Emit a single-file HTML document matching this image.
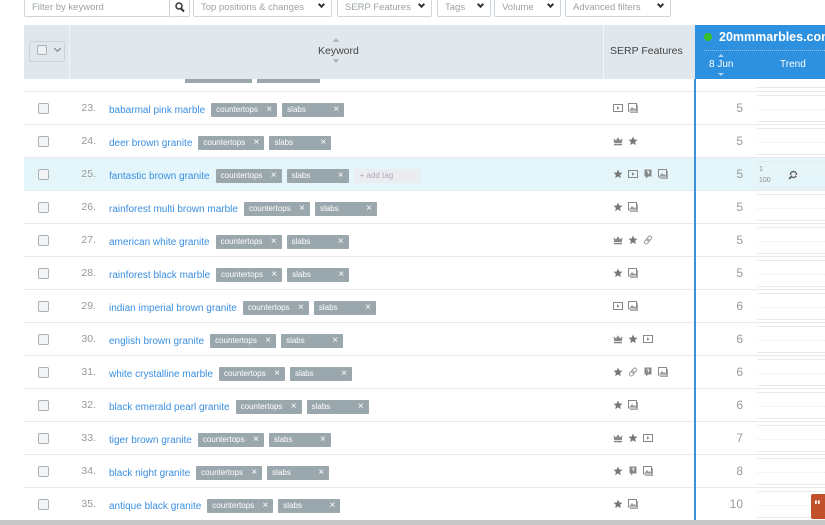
<!DOCTYPE html>
<html><head><meta charset="utf-8"><style>
*{box-sizing:border-box;margin:0;padding:0}
body{width:825px;height:525px;overflow:hidden;background:#fff;font-family:"Liberation Sans",sans-serif;position:relative}
.ab{position:absolute}
.fb{position:absolute;top:-2px;height:19px;border:1px solid #cfd6db;border-radius:2px;background:#fff;font-size:9.5px;color:#9aa3a8;line-height:17px;padding-left:7px;white-space:nowrap;overflow:hidden}
.fb .ch{position:absolute;right:7px;top:3px;width:5px;height:5px;border-right:2px solid #333;border-bottom:2px solid #333;transform:rotate(45deg)}
.row{position:absolute;left:24px;width:801px;height:33px;border-top:1px solid #e6eaed}
.cb{position:absolute;left:14px;top:11px;width:11px;height:11px;border:1px solid #aab2b7;border-radius:2px;background:#f2f4f5}
.num{position:absolute;left:45px;width:27px;text-align:right;top:10px;font-size:10.5px;color:#999}
.kw{position:absolute;left:85px;top:11px;font-size:10px;color:#3a8fe0;white-space:nowrap;display:flex;align-items:center}
.kw span.t{margin-left:6px;display:inline-block;height:14px;background:#9aa7ac;color:#fff;font-size:8px;line-height:14px;padding-left:5px;border-radius:1px;position:relative}
.kw span.c{width:66px}.kw span.s{width:62px;margin-left:5px}
.kw span.t:after{content:"×";position:absolute;right:5px;top:0;font-size:10px}
.kw span.add{margin-left:5px;width:67px;height:14px;background:#eaeef0;color:#aab;font-size:8px;line-height:14px;padding-left:6px;display:inline-block}
.ic{position:absolute;left:589px;top:11px;display:flex;gap:5px}
.ic svg{width:10px;height:10px}
.pos{position:absolute;left:680px;width:39px;text-align:right;top:9px;font-size:12px;color:#999}
.tr{position:absolute;left:733px;width:68px;top:3px;height:27px;border-top:1px solid #e8ebed;border-bottom:1px solid #e8ebed}
.tr:after{content:"";position:absolute;left:0;right:0;top:13px;border-top:1px dotted #eceef0}
</style></head><body>
<svg width="0" height="0" style="position:absolute"><defs>
<symbol id="st" viewBox="0 0 10 10"><path d="M5 .5l1.3 3 3.2.3-2.4 2.1.7 3.2L5 7.4 2.2 9.1l.7-3.2L.5 3.8l3.2-.3z" fill="#777"/></symbol>
<symbol id="cr" viewBox="0 0 10 10"><path d="M1.2 7.2L.6 2.4 3 4.4 5 1.2 7 4.4 9.4 2.4 8.8 7.2z" fill="#888"/><rect x="1" y="8" width="8" height="1.3" fill="#888"/></symbol>
<symbol id="vi" viewBox="0 0 10 10"><rect x=".5" y="1.5" width="9" height="7" fill="none" stroke="#888"/><path d="M4 3.3v3.4L6.6 5z" fill="#888"/></symbol>
<symbol id="im" viewBox="0 0 10 10"><rect x=".5" y=".5" width="8" height="7.5" fill="none" stroke="#888"/><path d="M1.5 7l2.5-3 2 2 1-1 1 2z" fill="#999"/><path d="M9.5 2v7.5H2" fill="none" stroke="#aaa"/></symbol>
<symbol id="lk" viewBox="0 0 10 10"><rect x="4.5" y="0.8" width="3.5" height="5.5" rx="1.7" transform="rotate(45 6.25 3.5)" fill="none" stroke="#999"/><rect x="2" y="3.7" width="3.5" height="5.5" rx="1.7" transform="rotate(45 3.75 6.5)" fill="none" stroke="#999"/></symbol>
<symbol id="qu" viewBox="0 0 10 10"><path d="M1.5 .5h7v7H5l-2 2v-2H1.5z" fill="#888"/><path d="M4 3a1 1 0 1 1 1.5 1L5 5" fill="none" stroke="#fff" stroke-width=".9"/></symbol>
</defs></svg>

<div class="fb" style="left:24px;width:146px">Filter by keyword</div>
<div class="fb" style="left:169px;width:21px;padding:0"><svg class="ab" style="left:5px;top:3px" width="10" height="11" viewBox="0 0 10 11"><circle cx="4" cy="4" r="3" fill="none" stroke="#333" stroke-width="1.5"/><path d="M6 6.5l3 3" stroke="#333" stroke-width="2"/></svg></div>
<div class="fb" style="left:193px;width:139px">Top positions &amp; changes<span class="ch"></span></div>
<div class="fb" style="left:337px;width:95px">SERP Features<span class="ch"></span></div>
<div class="fb" style="left:437px;width:54px">Tags<span class="ch"></span></div>
<div class="fb" style="left:494px;width:67px">Volume<span class="ch"></span></div>
<div class="fb" style="left:565px;width:106px">Advanced filters<span class="ch"></span></div>

<div class="ab" style="left:24px;top:25px;width:671px;height:54px;background:#e1e8ed"></div>
<div class="ab" style="left:69px;top:25px;width:1px;height:54px;background:#f4f6f8"></div>
<div class="ab" style="left:603px;top:25px;width:1px;height:54px;background:#f4f6f8"></div>
<div class="ab" style="left:29px;top:41px;width:36px;height:21px;border:1px solid #cdd5da;border-radius:2px"></div>
<div class="ab" style="left:37px;top:45px;width:10px;height:10px;border:1px solid #aab2b7;border-radius:2px;background:#eef1f3"></div>
<div class="ab" style="left:55px;top:46px;width:5px;height:5px;border-right:1.5px solid #777;border-bottom:1.5px solid #777;transform:rotate(45deg)"></div>
<div class="ab" style="left:318px;top:45px;font-size:10.5px;color:#444">Keyword</div>
<div class="ab" style="left:333px;top:38px;width:0;height:0;border:3px solid transparent;border-bottom:4px solid #aab4ba;border-top:0"></div>
<div class="ab" style="left:333px;top:59px;width:0;height:0;border:3px solid transparent;border-top:4px solid #aab4ba;border-bottom:0"></div>
<div class="ab" style="left:610px;top:45px;font-size:10.5px;color:#444">SERP Features</div>
<div class="ab" style="left:695px;top:25px;width:130px;height:54px;background:#2e91e0"></div>
<div class="ab" style="left:704px;top:33px;width:8px;height:8px;border-radius:50%;background:#39c12c"></div>
<div class="ab" style="left:719px;top:30px;font-size:12.5px;font-weight:bold;color:#fff;white-space:nowrap">20mmmarbles.com</div>
<div class="ab" style="left:704px;top:50px;width:121px;border-top:1px dotted #8cc2ee"></div>
<div class="ab" style="left:709px;top:59px;font-size:10px;color:#fff">8 Jun</div>
<div class="ab" style="left:718px;top:54px;border:3px solid transparent;border-bottom:3px solid #a9d2f3;border-top:0"></div>
<div class="ab" style="left:718px;top:73px;border:3px solid transparent;border-top:3px solid #a9d2f3;border-bottom:0"></div>
<div class="ab" style="left:780px;top:59px;font-size:10px;color:#fff">Trend</div>

<div class="ab" style="left:185px;top:79px;width:67px;height:4px;background:#9aa7ac"></div>
<div class="ab" style="left:257px;top:79px;width:63px;height:4px;background:#9aa7ac"></div>
<div class="ab" style="left:757px;top:87px;width:68px;border-top:1px solid #e3e7ea"></div>

<div class="row" style="top:91px"><div class="cb"></div><div class="num">23.</div><div class="kw">babarmal pink marble<span class="t c">countertops</span><span class="t s">slabs</span></div><div class="ic"><svg><use href="#vi"/></svg><svg><use href="#im"/></svg></div><div class="pos">5</div><div class="tr"></div></div>
<div class="row" style="top:124px"><div class="cb"></div><div class="num">24.</div><div class="kw">deer brown granite<span class="t c">countertops</span><span class="t s">slabs</span></div><div class="ic"><svg><use href="#cr"/></svg><svg><use href="#st"/></svg></div><div class="pos">5</div><div class="tr"></div></div>
<div class="row" style="top:157px;background:#e5f6fb"><div class="cb"></div><div class="num">25.</div><div class="kw">fantastic brown granite<span class="t c">countertops</span><span class="t s">slabs</span><span class="add">+ add tag</span></div><div class="ic"><svg><use href="#st"/></svg><svg><use href="#vi"/></svg><svg><use href="#qu"/></svg><svg><use href="#im"/></svg></div><div class="pos">5</div><div class="tr"><span class="ab" style="left:2px;top:4px;font-size:7px;color:#888">1</span><span class="ab" style="left:2px;top:15px;font-size:7px;color:#888">100</span><svg class="ab" style="left:31px;top:8px" width="10" height="10" viewBox="0 0 10 10"><circle cx="5.5" cy="4.5" r="3" fill="none" stroke="#666" stroke-width="1.5"/><path d="M3.5 6.5L1 9" stroke="#666" stroke-width="1.8"/></svg></div></div>
<div class="row" style="top:190px"><div class="cb"></div><div class="num">26.</div><div class="kw">rainforest multi brown marble<span class="t c">countertops</span><span class="t s">slabs</span></div><div class="ic"><svg><use href="#st"/></svg><svg><use href="#im"/></svg></div><div class="pos">5</div><div class="tr"></div></div>
<div class="row" style="top:223px"><div class="cb"></div><div class="num">27.</div><div class="kw">american white granite<span class="t c">countertops</span><span class="t s">slabs</span></div><div class="ic"><svg><use href="#cr"/></svg><svg><use href="#st"/></svg><svg><use href="#lk"/></svg></div><div class="pos">5</div><div class="tr"></div></div>
<div class="row" style="top:256px"><div class="cb"></div><div class="num">28.</div><div class="kw">rainforest black marble<span class="t c">countertops</span><span class="t s">slabs</span></div><div class="ic"><svg><use href="#st"/></svg><svg><use href="#im"/></svg></div><div class="pos">5</div><div class="tr"></div></div>
<div class="row" style="top:289px"><div class="cb"></div><div class="num">29.</div><div class="kw">indian imperial brown granite<span class="t c">countertops</span><span class="t s">slabs</span></div><div class="ic"><svg><use href="#vi"/></svg><svg><use href="#im"/></svg></div><div class="pos">6</div><div class="tr"></div></div>
<div class="row" style="top:322px"><div class="cb"></div><div class="num">30.</div><div class="kw">english brown granite<span class="t c">countertops</span><span class="t s">slabs</span></div><div class="ic"><svg><use href="#cr"/></svg><svg><use href="#st"/></svg><svg><use href="#vi"/></svg></div><div class="pos">6</div><div class="tr"></div></div>
<div class="row" style="top:355px"><div class="cb"></div><div class="num">31.</div><div class="kw">white crystalline marble<span class="t c">countertops</span><span class="t s">slabs</span></div><div class="ic"><svg><use href="#st"/></svg><svg><use href="#lk"/></svg><svg><use href="#qu"/></svg><svg><use href="#im"/></svg></div><div class="pos">6</div><div class="tr"></div></div>
<div class="row" style="top:388px"><div class="cb"></div><div class="num">32.</div><div class="kw">black emerald pearl granite<span class="t c">countertops</span><span class="t s">slabs</span></div><div class="ic"><svg><use href="#st"/></svg><svg><use href="#im"/></svg></div><div class="pos">6</div><div class="tr"></div></div>
<div class="row" style="top:421px"><div class="cb"></div><div class="num">33.</div><div class="kw">tiger brown granite<span class="t c">countertops</span><span class="t s">slabs</span></div><div class="ic"><svg><use href="#cr"/></svg><svg><use href="#st"/></svg><svg><use href="#vi"/></svg></div><div class="pos">7</div><div class="tr"></div></div>
<div class="row" style="top:454px"><div class="cb"></div><div class="num">34.</div><div class="kw">black night granite<span class="t c">countertops</span><span class="t s">slabs</span></div><div class="ic"><svg><use href="#st"/></svg><svg><use href="#qu"/></svg><svg><use href="#im"/></svg></div><div class="pos">8</div><div class="tr"></div></div>
<div class="row" style="top:487px"><div class="cb"></div><div class="num">35.</div><div class="kw">antique black granite<span class="t c">countertops</span><span class="t s">slabs</span></div><div class="ic"><svg><use href="#st"/></svg><svg><use href="#im"/></svg></div><div class="pos">10</div><div class="tr"></div></div>

<div class="ab" style="left:694px;top:79px;width:2px;height:441px;background:#3a92dd"></div>
<div class="ab" style="left:811px;top:494px;width:14px;height:25px;background:#c0512a;border-radius:2px 0 0 2px"><span class="ab" style="left:3px;top:3px;color:#fff;font-size:14px;font-weight:bold">"</span></div>
<div class="ab" style="left:0;top:520px;width:825px;height:5px;background:#c8c8c8"></div>
</body></html>
